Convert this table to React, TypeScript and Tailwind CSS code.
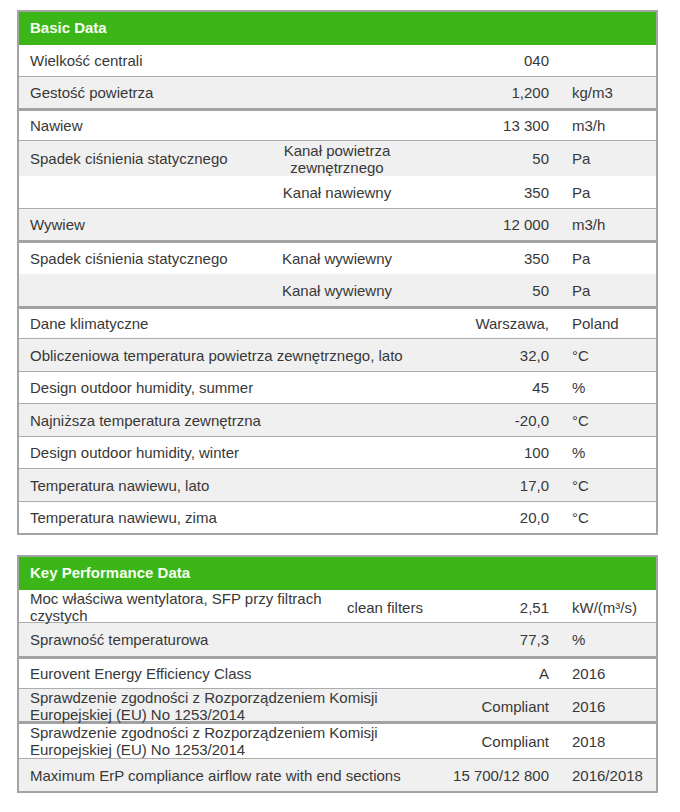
type Sep = "thin" | "thick" | "none";

interface RowDef {
  label: string;
  sub?: string;
  value?: string;
  unit?: string;
  h: number;
  sep: Sep;
}

const basicRows: RowDef[] = [
  { label: "Wielkość centrali", value: "040", h: 32, sep: "thin" },
  { label: "Gestość powietrza", value: "1,200", unit: "kg/m3", h: 34, sep: "thick" },
  { label: "Nawiew", value: "13 300", unit: "m3/h", h: 30, sep: "thin" },
  { label: "Spadek ciśnienia statycznego", sub: "Kanał powietrza zewnętrznego", value: "50", unit: "Pa", h: 35, sep: "none" },
  { label: "", sub: "Kanał nawiewny", value: "350", unit: "Pa", h: 33, sep: "thin" },
  { label: "Wywiew", value: "12 000", unit: "m3/h", h: 34, sep: "thick" },
  { label: "Spadek ciśnienia statycznego", sub: "Kanał wywiewny", value: "350", unit: "Pa", h: 31, sep: "none" },
  { label: "", sub: "Kanał wywiewny", value: "50", unit: "Pa", h: 35, sep: "thick" },
  { label: "Dane klimatyczne", value: "Warszawa,", unit: "Poland", h: 30, sep: "thin" },
  { label: "Obliczeniowa temperatura powietrza zewnętrznego, lato", value: "32,0", unit: "°C", h: 33, sep: "thin" },
  { label: "Design outdoor humidity, summer", value: "45", unit: "%", h: 32, sep: "thin" },
  { label: "Najniższa temperatura zewnętrzna", value: "-20,0", unit: "°C", h: 33, sep: "thin" },
  { label: "Design outdoor humidity, winter", value: "100", unit: "%", h: 32, sep: "thin" },
  { label: "Temperatura nawiewu, lato", value: "17,0", unit: "°C", h: 33, sep: "thin" },
  { label: "Temperatura nawiewu, zima", value: "20,0", unit: "°C", h: 31, sep: "none" },
];

const perfRows: RowDef[] = [
  { label: "Moc właściwa wentylatora, SFP przy filtrach czystych", sub: "clean filters", value: "2,51", unit: "kW/(m³/s)", h: 33, sep: "thin" },
  { label: "Sprawność temperaturowa", value: "77,3", unit: "%", h: 36, sep: "thick" },
  { label: "Eurovent Energy Efficiency Class", value: "A", unit: "2016", h: 30, sep: "thin" },
  { label: "Sprawdzenie zgodności z Rozporządzeniem Komisji Europejskiej (EU) No 1253/2014", value: "Compliant", unit: "2016", h: 35, sep: "thick" },
  { label: "Sprawdzenie zgodności z Rozporządzeniem Komisji Europejskiej (EU) No 1253/2014", value: "Compliant", unit: "2018", h: 35, sep: "thin" },
  { label: "Maximum ErP compliance airflow rate with end sections", value: "15 700/12 800", unit: "2016/2018", h: 32, sep: "none" },
];

const sepClass: Record<Sep, string> = {
  thin: "border-b border-[#acacac]",
  thick: "border-b-[3px] border-[#a2a2a2]",
  none: "",
};

// rows without a sub label let the label run across the sub column
const DataTable = ({ title, rows, cols }: { title: string; rows: RowDef[]; cols: string }) => (
  <div className="border-2 border-[#a4a4a4] bg-white">
    <div className="h-[33px] bg-[#3cb518] pl-[11px] flex items-center text-[15px] font-bold text-[#f4fff0]">{title}</div>
    {rows.map((r, i) => {
      const span = !r.sub && r.label !== "";
      return (
        <div
          key={i}
          className={`grid ${cols} items-center leading-[17px] ${i % 2 === 1 ? "bg-[#f0f0f0]" : "bg-white"} ${sepClass[r.sep]}`}
          style={{ height: r.h }}
        >
          <div className={`pl-[11px] pr-2 ${span ? "col-span-2" : ""}`}>{r.label}</div>
          {!span && <div className="text-center px-1">{r.sub}</div>}
          <div className="text-right pr-2">{r.value}</div>
          <div className="pl-[15px]">{r.unit}</div>
        </div>
      );
    })}
  </div>
);

export default function App() {
  return (
    <div className="w-[680px] h-[812px] bg-white pl-[17px] pr-[22px] pt-[10px] text-[15px] text-[#383838] font-['Liberation_Sans',Arial,sans-serif]">
      <DataTable title="Basic Data" rows={basicRows} cols="grid-cols-[243px_150px_145px_1fr]" />
      <div className="h-[20px]" />
      <DataTable title="Key Performance Data" rows={perfRows} cols="grid-cols-[321px_90px_127px_1fr]" />
    </div>
  );
}
